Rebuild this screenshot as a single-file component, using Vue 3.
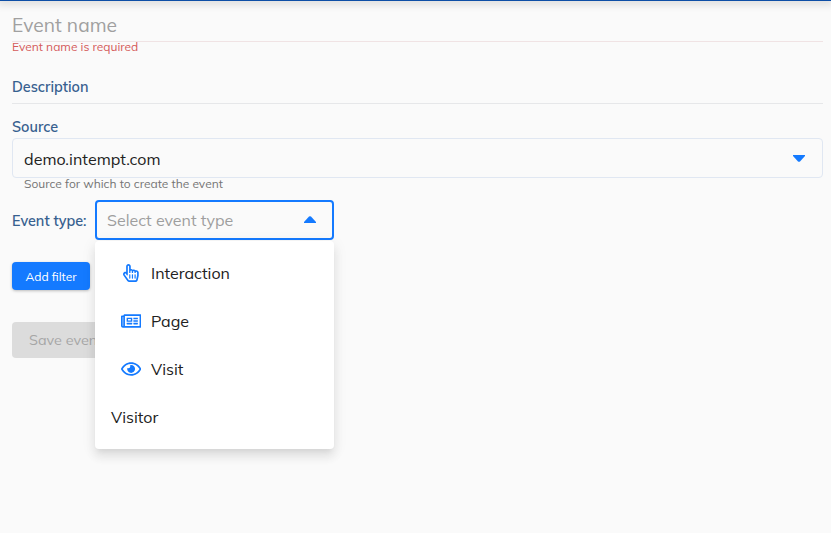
<script setup>
const options = [
  {
    label: 'Interaction',
    width: 448,
    path: 'M358.182 179.361c-19.493-24.768-52.679-31.945-79.872-19.098-15.127-15.687-36.182-22.487-56.595-19.629V67c0-36.944-29.736-67-66.286-67S89.143 30.056 89.143 67v161.129c-19.909-7.41-43.272-5.094-62.083 8.872-29.355 21.795-35.793 63.333-14.55 93.152l109.699 154.001C134.632 501.59 154.741 512 176 512h178.286c30.802 0 57.574-21.5 64.557-51.797l27.429-118.999A67.873 67.873 0 0 0 448 326v-84c0-46.844-46.625-79.273-89.818-62.639zM80.985 279.697l27.126 38.079c8.995 12.626 29.031 6.287 29.031-9.283V67c0-25.12 36.571-25.16 36.571 0v175c0 8.836 7.163 16 16 16h6.857c8.837 0 16-7.164 16-16v-35c0-25.12 36.571-25.16 36.571 0v35c0 8.836 7.163 16 16 16H272c8.837 0 16-7.164 16-16v-21c0-25.12 36.571-25.16 36.571 0v21c0 8.836 7.163 16 16 16h6.857c8.837 0 16-7.164 16-16 0-25.121 36.571-25.16 36.571 0v84c0 1.488-.169 2.977-.502 4.423l-27.43 119.001c-1.978 8.582-9.29 14.576-17.782 14.576H176c-5.769 0-11.263-2.878-14.697-7.697l-109.712-154c-14.406-20.223 14.994-42.818 29.394-22.606zM176.143 400v-96c0-8.837 6.268-16 14-16h6c7.732 0 14 7.163 14 16v96c0 8.837-6.268 16-14 16h-6c-7.733 0-14-7.163-14-16zm75.428 0v-96c0-8.837 6.268-16 14-16h6c7.732 0 14 7.163 14 16v96c0 8.837-6.268 16-14 16h-6c-7.732 0-14-7.163-14-16zM327 400v-96c0-8.837 6.268-16 14-16h6c7.732 0 14 7.163 14 16v96c0 8.837-6.268 16-14 16h-6c-7.732 0-14-7.163-14-16z',
  },
  {
    label: 'Page',
    width: 576,
    path: 'M552 64H112c-20.858 0-38.643 13.377-45.248 32H24c-13.255 0-24 10.745-24 24v272c0 30.928 25.072 56 56 56h496c13.255 0 24-10.745 24-24V88c0-13.255-10.745-24-24-24zM48 392V144h16v248c0 4.411-3.589 8-8 8s-8-3.589-8-8zm480 8H111.422c.374-2.614.578-5.283.578-8V112h416v288zM172 280h136c6.627 0 12-5.373 12-12v-96c0-6.627-5.373-12-12-12H172c-6.627 0-12 5.373-12 12v96c0 6.627 5.373 12 12 12zm28-80h80v40h-80v-40zm-40 140v-24c0-6.627 5.373-12 12-12h136c6.627 0 12 5.373 12 12v24c0 6.627-5.373 12-12 12H172c-6.627 0-12-5.373-12-12zm192 0v-24c0-6.627 5.373-12 12-12h104c6.627 0 12 5.373 12 12v24c0 6.627-5.373 12-12 12H364c-6.627 0-12-5.373-12-12zm0-144v-24c0-6.627 5.373-12 12-12h104c6.627 0 12 5.373 12 12v24c0 6.627-5.373 12-12 12H364c-6.627 0-12-5.373-12-12zm0 72v-24c0-6.627 5.373-12 12-12h104c6.627 0 12 5.373 12 12v24c0 6.627-5.373 12-12 12H364c-6.627 0-12-5.373-12-12z',
  },
  {
    label: 'Visit',
    width: 576,
    path: 'M288 144a110.94 110.94 0 0 0-31.24 5 55.4 55.4 0 0 1 7.24 27 56 56 0 0 1-56 56 55.4 55.4 0 0 1-27-7.24A111.71 111.71 0 1 0 288 144zm284.52 97.4C518.29 135.59 410.93 64 288 64S57.68 135.64 3.48 241.41a32.35 32.35 0 0 0 0 29.19C57.71 376.41 165.07 448 288 448s230.32-71.64 284.52-177.41a32.35 32.35 0 0 0 0-29.19zM288 400c-98.65 0-189.09-55-237.93-144C98.91 167 189.34 112 288 112s189.09 55 237.93 144C477.1 345 386.66 400 288 400z',
  },
  { label: 'Visitor' },
]
</script>

<template>
  <main class="page">
    <header class="topbar"></header>
    <form class="form">
      <div class="name">Event name</div>
      <div class="error">Event name is required</div>
      <div class="description">Description</div>
      <label class="label">Source</label>
      <div class="select source">
        <span class="source-text">demo.intempt.com</span>
        <svg class="caret" viewBox="0 0 12 7"><path d="M0 0h12v1L7 6.4q-1 .9-2 0L0 1z" /></svg>
      </div>
      <div class="hint">Source for which to create the event</div>
      <div class="type-row">
        <span class="label type-label">Event type:</span>
        <div class="select type">
          <span class="placeholder">Select event type</span>
          <svg class="caret up" viewBox="0 0 12 7"><path d="M0 7h12V6L7 .6Q6-.3 5 .6L0 6z" /></svg>
          <ul class="menu">
            <li v-for="o in options" :key="o.label" class="option">
              <span v-if="o.path" class="icon">
                <svg height="18" :width="(o.width / 512) * 18" :viewBox="`0 0 ${o.width} 512`"><path :d="o.path" /></svg>
              </span>
              <span>{{ o.label }}</span>
            </li>
          </ul>
        </div>
      </div>
      <button type="button" class="add">Add filter</button>
      <button type="button" class="save" disabled>Save event</button>
    </form>
  </main>
</template>

<style>
body {
  margin: 0;
  background: #fafafa;
}
</style>

<style scoped>
.page {
  height: 533px;
  overflow: hidden;
  background: #fafafa;
  font-family: Mulish, Muli, Lato, sans-serif;
  color: #212121;
}
.topbar {
  height: 1px;
  background: #0d4ea6;
  box-shadow: 0 0 8px 3px rgba(0, 0, 0, 0.15);
}
.form {
  display: flex;
  flex-direction: column;
  align-items: stretch;
  padding: 10px 8px 0 12px;
}
.name {
  box-sizing: border-box;
  height: 31px;
  border-bottom: 1px solid #f0e3e4;
  color: #a0a0a0;
  font-size: 19.2px;
  line-height: 29px;
  letter-spacing: 0.05px;
}
.error {
  height: 12px;
  color: #d55b5b;
  font-size: 12px;
  line-height: 10px;
}
.description {
  box-sizing: border-box;
  height: 50px;
  padding-top: 23px;
  border-bottom: 1px solid #e6e7e9;
  color: #37608f;
  font-size: 14.4px;
  font-weight: 600;
  line-height: 20px;
}
.label {
  height: 34px;
  padding-top: 13px;
  box-sizing: border-box;
  color: #37608f;
  font-size: 14.4px;
  font-weight: 600;
  line-height: 20px;
}
.select {
  position: relative;
  display: flex;
  align-items: center;
  justify-content: space-between;
  box-sizing: border-box;
  height: 40px;
  font-size: 16px;
}
.source {
  padding: 0 17px 0 11px;
  border: 1px solid #e0e7f2;
  border-radius: 4px;
}
.source-text {
  padding-top: 2px;
  letter-spacing: 0.05px;
}
.caret {
  width: 12px;
  height: 7px;
  fill: #147aff;
}
.up {
  margin-bottom: 1px;
}
.hint {
  height: 22px;
  padding-left: 12px;
  color: #757575;
  font-size: 12px;
  line-height: 12px;
}
.type-row {
  display: flex;
}
.type-label {
  width: 83px;
  height: 40px;
  padding-top: 11px;
}
.type {
  width: 239px;
  padding: 0 16px 0 10px;
  border: 2px solid #147aff;
  border-radius: 4px;
}
.placeholder {
  color: #9e9e9e;
}
.menu {
  position: absolute;
  top: 39px;
  left: -2px;
  z-index: 2;
  width: 239px;
  box-sizing: border-box;
  margin: 0;
  padding: 8px 0;
  list-style: none;
  background: #fff;
  border-radius: 4px;
  box-shadow: 0 5px 5px -3px rgba(0, 0, 0, 0.06), 0 8px 10px 1px rgba(0, 0, 0, 0.06), 0 3px 14px 2px rgba(0, 0, 0, 0.06);
}
.option {
  display: flex;
  align-items: center;
  height: 48px;
  padding-left: 16px;
}
.icon {
  display: flex;
  justify-content: center;
  width: 40px;
}
.icon svg {
  fill: #147aff;
}
button {
  border: 0;
  border-radius: 4px;
  font-family: inherit;
  white-space: nowrap;
}
.add {
  width: 78px;
  height: 28px;
  margin-top: 22px;
  padding: 0;
  background: #147aff;
  box-shadow: 0 1px 3px rgba(0, 0, 0, 0.25);
  color: #fff;
  font-size: 12px;
}
.save {
  width: 106px;
  height: 36px;
  margin-top: 32px;
  padding: 0 0 0 17px;
  background: #dcdcdc;
  color: #a6a6a6;
  font-size: 14.4px;
  text-align: left;
}
</style>
